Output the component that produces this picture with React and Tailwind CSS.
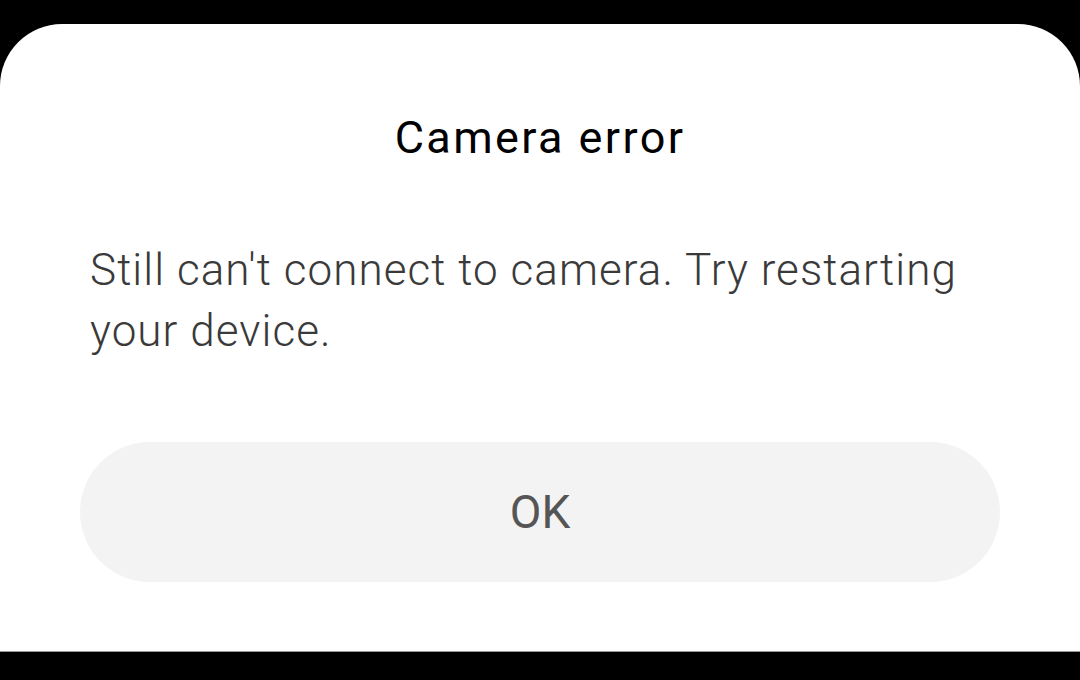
export default function App() {
  return (
    <div className="w-[1080px] h-[680px] bg-black flex flex-col overflow-hidden" style={{ fontFamily: "Roboto, 'Noto Sans', sans-serif" }}>
      <div className="h-[24px] shrink-0" />
      <div className="h-[627px] shrink-0 bg-white rounded-t-[62px] flex flex-col px-[80px]">
        <h1 className="mt-[91px] h-[45px] text-center text-[45px] leading-none tracking-[2.4px] text-black font-normal">Camera error</h1>
        <p className="mt-[80px] px-[10px] text-[44px] leading-[61px] tracking-[1.05px] font-light text-[#3a3a3a]">
          Still can't connect to camera. Try restarting your device.
        </p>
        <button className="mt-[80px] h-[140px] w-full rounded-full bg-[#f3f3f3] text-[46px] text-[#555555]">OK</button>
      </div>
      <div className="h-px bg-[#9a9a9a] shrink-0" />
    </div>
  );
}
